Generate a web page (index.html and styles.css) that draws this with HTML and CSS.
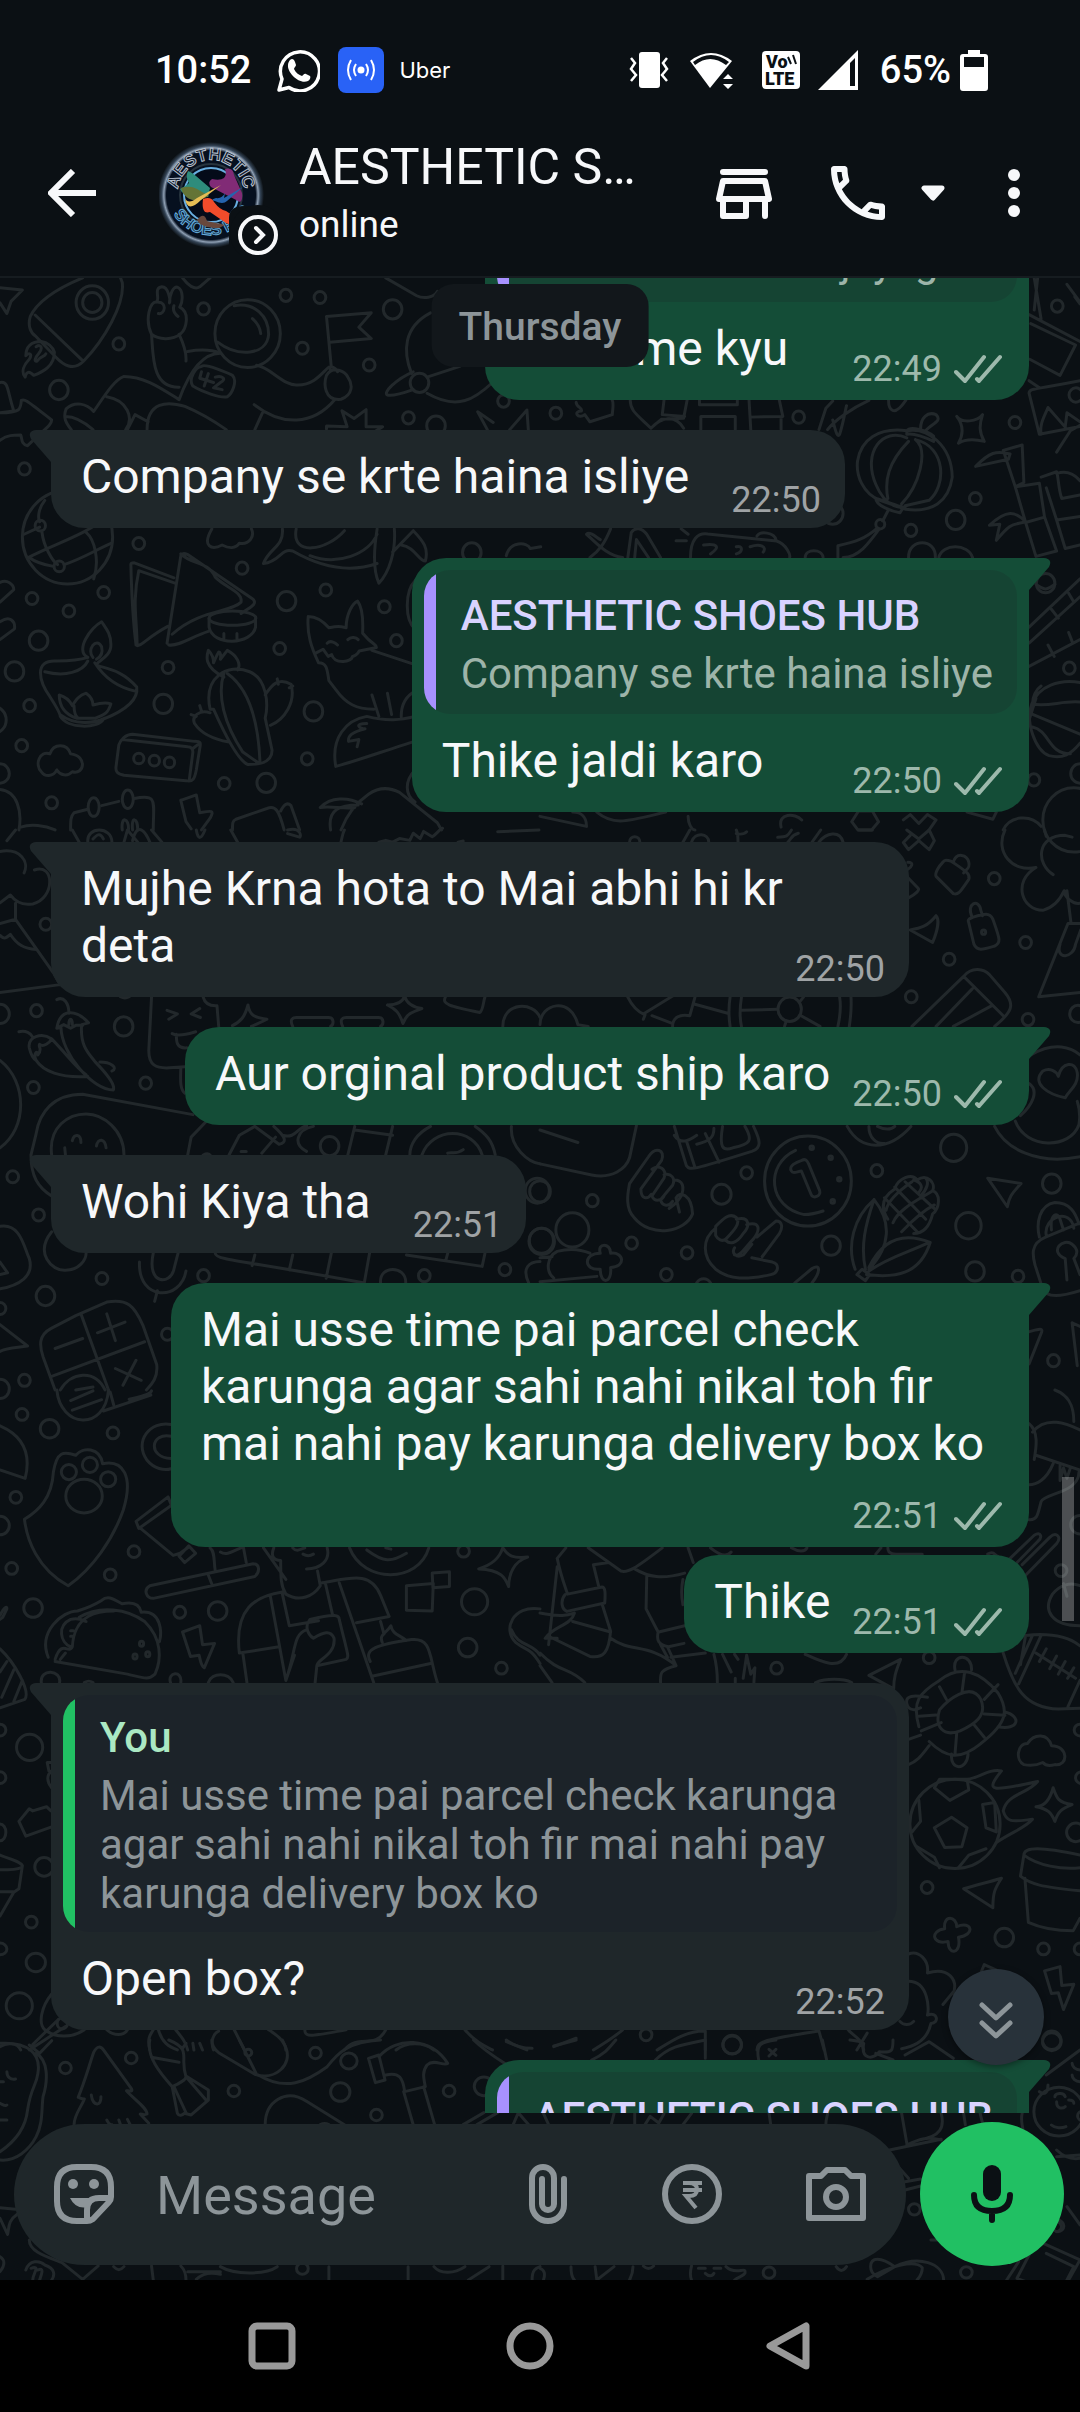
FILE: index.html
```html
<!DOCTYPE html>
<html lang="en">
<head>
<meta charset="utf-8">
<meta name="viewport" content="width=device-width, initial-scale=1">
<title>Chat</title>
<link rel="stylesheet" href="styles.css">
</head>
<body>
<svg class="sprite" aria-hidden="true">
  <symbol id="ticks" viewBox="0 0 48 30"><path d="M2 18l9 9L30 3M23 25l2 2L46 3" fill="none" stroke="currentColor" stroke-width="4" stroke-linecap="round" stroke-linejoin="round"/></symbol>
</svg>
<div class="app">
  <div class="status">
    <div class="status-side">
      <span class="status-text">10:52</span>
      <svg class="s-whatsapp" viewBox="0 0 44 44" width="44" height="44"><path d="M3 42l3-11A19.500 19.500 0 1 1 13 39.500z" fill="none" stroke="#fff" stroke-width="3.500" stroke-linejoin="round"/><path d="M14 12c2-2 4-1 5 2l1 3c0 1-2 3-2 4 2 4 5 6 8 7 1 0 2-3 4-2l4 2c1 1 0 4-2 5-8 4-21-8-20-16 0-2 1-4 2-5z" fill="#fff"/></svg>
      <svg class="s-cast" viewBox="0 0 46 46" width="46" height="46"><rect width="46" height="46" rx="8" fill="#2962f6"/><circle cx="23" cy="23" r="3.500" fill="#fff"/><path d="M18 17q-4 6 0 12M28 17q4 6 0 12M13 13q-6 10 0 20M33 13q6 10 0 20" fill="none" stroke="#fff" stroke-width="2"/></svg>
      <span class="uber">Uber</span>
    </div>
    <div class="status-side status-right">
      <svg viewBox="0 0 40 38" width="40" height="38"><rect x="10" y="1" width="21" height="36" rx="3" fill="#fff"/><path d="M2 7l4 5-4 6 5 6-5 6M38 7l-4 5 4 6-5 6 5 6" fill="none" stroke="#fff" stroke-width="2.500"/></svg>
      <svg class="s-wifi" viewBox="0 0 46 38" width="46" height="38"><path d="M2 10Q23-6 44 10L22 37z" fill="#fff"/><path d="M5 11Q23-3 41 11l-3 3Q22 2 7 14z" fill="#0b1014"/><path d="M40 22l6 7-6 8-11 1V29z" fill="#0b1014"/><path d="M40 23l5 5H35zM40 38l5-5H35z" fill="#fff"/></svg>
      <svg class="s-volte" viewBox="0 0 38 38" width="38" height="38"><rect width="38" height="38" rx="4" fill="#fff"/><text x="4" y="17" class="volte">Vo</text><text x="3" y="34" class="volte">LTE</text><path d="M26 6l3 7M31 4l3 9" stroke="#0b1014" stroke-width="2"/></svg>
      <svg class="s-signal" viewBox="0 0 40 40" width="40" height="40"><path d="M0 40L40 0v40z" fill="#fff"/><path d="M32 13l5-5v28h-5z" fill="#0b1014"/></svg>
      <span class="status-text">65%</span>
      <svg class="s-battery" viewBox="0 0 28 42" width="28" height="42"><path d="M8 1h12v4h5q3 0 3 3v31q0 3-3 3H3q-3 0-3-3V8q0-3 3-3h5z" fill="#fff"/><path d="M4 8h20v10H4z" fill="#0b1014"/></svg>
    </div>
  </div>

  <header class="appbar">
    <button class="icon-btn" aria-label="Back"><svg viewBox="0 0 48 48" width="48" height="48"><path d="M48 24H5M25 2L3 24l22 22" fill="none" stroke="currentColor" stroke-width="6"/></svg></button>
    <svg class="avatar" viewBox="0 -10 120 124" width="120" height="124">
      <defs>
        <radialGradient id="rim"><stop offset=".84" stop-color="#06101f"/><stop offset=".89" stop-color="#8fa0b4"/><stop offset=".93" stop-color="#344456"/><stop offset="1" stop-color="#0b1014"/></radialGradient>
        <path id="arc-top" d="M19 52A33 33 0 0 1 85 52"/>
        <path id="arc-bottom" d="M8 50A44 44 0 0 0 96 50"/>
      </defs>
      <circle cx="52" cy="54" r="53" fill="url(#rim)"/>
      <circle cx="52" cy="54" r="27" fill="#040b19" stroke="#68aee0" stroke-width="2"/>
      <circle cx="52" cy="54" r="31" fill="none" stroke="#27343e" stroke-width="2"/>
      <text class="logo-top"><textPath href="#arc-top" startOffset="50%" text-anchor="middle">AESTHETIC</textPath></text>
      <text class="logo-bottom"><textPath href="#arc-bottom" startOffset="52%" text-anchor="middle">SHOES HUB</textPath></text>
      <path d="M29 30q5 2 8 5l14 12-2 9-15-2q-11 0-13-6 6-3 9-6-4-6-1-12z" fill="#2e8c7c"/>
      <path d="M22 47q9-3 16 1l12 7-11 5q-14-1-17-13z" fill="#647436"/>
      <path d="M66 28q8-2 9 6l8 18q1 7-2 9l-29-15q-4-5 1-8 8 2 12-1 3-3 1-9z" fill="#812b76"/>
      <path d="M26 57q3 7 12 0l24-13-20 15q-14 14-16-2z" fill="#e5bd55"/>
      <path d="M84 46L68 60q-4 4-12 0-6-1 1-3 6 1 9-5l-1 5z" fill="#2563ad"/>
      <path d="M44 58q8-3 11 3 6 8 12 9l12 8q-4 8-12 4L51 71q-9 3-7-13z" fill="#f14c2b"/>
      <path d="M38 79q7-9 10 1 9 2 18 4l-6 3q-18 0-22-8z" fill="#68483c"/>
      <path d="M70 77q0-12 15-12h22v50H70z" fill="#0b1014"/>
      <circle cx="99" cy="92" r="28" fill="#0b1014"/>
      <circle cx="99" cy="94" r="18" fill="none" stroke="#f7f8fa" stroke-width="4"/>
      <path d="M97 87l7 7-7 7" fill="none" stroke="#f7f8fa" stroke-width="4" stroke-linecap="round"/>
    </svg>
    <div class="contact">
      <h1 class="name">AESTHETIC SHOES HUB</h1>
      <p class="presence">online</p>
    </div>
    <button class="icon-btn" aria-label="Shop"><svg viewBox="0 0 72 72" width="72" height="72"><g fill="none" stroke="currentColor" stroke-width="6" stroke-linecap="round" stroke-linejoin="round"><path d="M15 15h42M15 24h42l4 18H11zM15 44v15h23V44M57 44v15"/></g></svg></button>
    <button class="icon-btn call" aria-label="Call"><svg viewBox="0 0 24 24" width="72" height="72"><path fill="currentColor" d="M6.540 5c.06.89.21 1.760.45 2.590l-1.200 1.200c-.41-1.200-.67-2.470-.76-3.790h1.510m9.860 12.020c.85.24 1.720.39 2.600.45v1.490c-1.320-.09-2.590-.35-3.800-.75l1.200-1.190M7.500 3H4c-.55 0-1 .45-1 1 0 9.390 7.610 17 17 17 .55 0 1-.45 1-1v-3.490c0-.55-.45-1-1-1-1.240 0-2.450-.2-3.570-.57-.1-.04-.21-.05-.31-.05-.26 0-.51.1-.71.29l-2.200 2.200c-2.830-1.450-5.150-3.760-6.590-6.590l2.200-2.200c.28-.28.36-.67.25-1.020C8.700 6.450 8.500 5.250 8.500 4c0-.55-.45-1-1-1z"/></svg></button>
    <button class="caret" aria-label="Call options"><svg viewBox="0 0 24 16" width="24" height="16"><path d="M3 3h18l-9 10z" fill="currentColor" stroke="currentColor" stroke-width="5" stroke-linejoin="round"/></svg></button>
    <button class="icon-btn more" aria-label="More options"><svg viewBox="0 0 12 48" width="12" height="48" fill="currentColor"><circle cx="6" cy="6" r="6"/><circle cx="6" cy="24" r="6"/><circle cx="6" cy="42" r="6"/></svg></button>
  </header>

  <main class="stage">
    <svg class="wallpaper" viewBox="0 278 1080 2002" preserveAspectRatio="xMidYMin slice" aria-hidden="true">
      <!-- space, flags and food, top left -->
      <g transform="translate(0 270) scale(.3444 .3571)">
        <path d="M0 50L65 56 32 88l-12 34L0 92M240 22C170 50 110 85 88 130c-8 25 0 45 15 55l60 60c20 20 50 40 80 10 60-60 120-160 112-220l-5-13M102 126l138 128M120 200c-30 0-45 15-45 40 10-10 20-5 10 10-15 15-25 35-12 50 5-20 15-15 25-5 25-10 60-25 60-65-5-15-20-28-38-30M105 215c15-10 20 5 8 18s-15 25-5 22c10-15 20-10 25-20"/>
        <circle cx="268" cy="91" r="47"/><circle cx="268" cy="91" r="28"/>
        <path d="M440 180c-20-40-5-95 15-90 10-10-10-40 15-43 20 0 25 40 22 45 0-20 10-50 25-43s15 40 5 55c30 15 20 60 2 75-25 20-65 15-84 1M460 90c25 0 20 35 0 32M505 100c-5 15 5 25 12 30M440 180c5 60 0 150 80 148M520 180c10 20 22 50 20 75M545 228c30-5 70-5 95 5M640 233c-50 0-90 50-120 130-50-30-100-65-160-65-30 10-60 60-88 98-20-22-55-30-80-7-10 25 0 40 15 58M190 410c30 0 60 20 80 37M310 355c60 10 80 60 55 92M370 447l22-42 38 20M427 447c0-80 60-80 110-65 50 20 90 45 120 65M745 267c40 5 80 60 120 55 50 0 75-40 90-50M738 377c80 60 170 60 235-15M762 400l-22 47M1120 22l90 50c20 10 50 5 60-12"/>
        <circle cx="719" cy="178" r="95"/><path d="M680 100c60-10 100 30 100 80-5 60-90 65-148 22M733 136c12 10 22 25 24 42"/>
        <path d="M585 270c10-10 80 20 90 25 15 15 0 50-15 60-20 5-75-15-100-30-15-20 10-55 25-55zM585 285l-5 18 40 12M605 290l-12 35M625 300c20-5 35 5 15 15l-20 15 25 5M962 272l-14-142 130-10-36 40 36 32-120 10M948 295c20-30 55-10 62 5 15 20 15 50-20 62-50 5-50-45-42-67zM960 282c-10-20 15-10 20 3"/>
        <path d="M1250 120c-80 40-80 110-55 170M1200 285c-50 20-90 60-75 65s60-10 75-15M1240 345c90 50 140 15 190-30M1240 300l95-30"/><circle cx="1218" cy="316" r="27"/>
        <path d="M948 445v-8l60 2-15-45 35 22 35-25v48h48l-20 12M1415 447l-28-50 45 30M1480 447l50-55 4 55M530 22c15 20 35 35 50 25l30-25M0 315c25-5 20 20 40 80L0 400M0 400c60 0 60-10 62-35 10-5 15 0 88 55 0 15-20 25-70 72-20-5-15-20-20-30-20 0-40 0-60 15"/>
        <circle cx="830" cy="71" r="17"/><circle cx="929" cy="77" r="17"/><circle cx="591" cy="109" r="17"/><circle cx="878" cy="219" r="17"/><circle cx="1072" cy="266" r="17"/><circle cx="1140" cy="110" r="27"/><circle cx="345" cy="207" r="17"/><circle cx="171" cy="336" r="27"/><circle cx="1186" cy="414" r="17"/><circle cx="1266" cy="436" r="27"/><circle cx="1462" cy="367" r="17"/><circle cx="71" cy="557" r="17"/>
        <circle cx="196" cy="748" r="131"/><circle cx="117" cy="716" r="15"/><circle cx="172" cy="830" r="15"/>
        <path d="M130 645c-20 25-20 50-15 60M70 740l45-20M122 735c5 40 30 80 45 90M82 805c80-40 160-60 240-120M186 825c50-15 100-45 138-60M85 805c20 15 40 20 70 25M250 735c25 20 40 80 22 130"/>
        <path d="M380 825c0-5 5-5 10-5l115 42M380 825c2 80 5 150 15 225 10 10 30-20 92-52M398 1050c0-70-15-120 5-208l105 35M485 1045L525 800c5-10 15-5 20-3l190 125c15 15-15 25-35 40M490 1050c30 5 70-25 115-38M525 795c30 30 80 20 100 65 30 30 80 40 75 70-30 30-120 20-200 90"/>
        <ellipse cx="675" cy="975" rx="68" ry="20"/><path d="M607 975v25c10 55 125 50 135 0v-25M650 1018v15M688 1018v15"/>
        <path d="M615 725c-30 50 0 60 30 45 20 10 40 10 50-5 30 5 45-20 35-40M820 725c5 50-40 55-55 97 50-5 50-45 85-35 90 50 170 60 245 35M860 725c-15 80 90 60 140 5M900 800c80 30 170-5 195-60M1095 725c-10 60-10 120 5 152 30-30 50-90 45-152M1140 790l60-60c30 30 45 50 35 85-20 0-30-40-70-45"/>
        <path d="M295 985c-30 15-80 80-40 100-30 10-60 10-90 10-70-5-50 60-20 100 20 30 30 45 30 55 20 35 110 35 125 8 90-35 100-70 97-90-40-45-80-50-113-60-15-10 40-20 38-60 0-30-15-45-27-63zM270 1085c-20-20 10-60 25-30 5 20-5 30-15 35M130 1125c60 15 110 0 125-30M275 1100c30 45 70 70 120 80M175 1245c40 30 100 25 130 10M172 1190c20 5 30 15 38 30 10-15 20-30 40-35 15 10 20 20 20 33 20-5 35-8 52-3-10 30-20 30-45 40h-55c-30-10-50-30-50-65zM215 1220c0 15 5 30 12 35"/>
        <path d="M650 1140c-60-30-50-60-45-75 10 10 15 20 15 35 5-10 8-20 15-30 5 0 7 10 5 20l20-25c30 15 40 40 30 55M610 1230c-20-90 50-130 115-105 50 20 55 90 45 130l20 90c0 40-50 40-70 40-30-10-70-90-100-155zM650 1130c-20 60 0 140 55 220l45 30M660 1130c60 40 90 130 95 250M770 1190c20-30 40-50 75-30 15 50-20 100-60 115M610 1240c-30-10-55 10-45 30 20 30 60 45 100 52M555 1245l15 5M580 1220l5 15M805 1145l3 15M850 1165l-10 5"/>
        <path d="M895 970c-5 50 10 90 30 130 25 0 25 20 30 50l20 25c30 40 60 55 110 55M895 970c25 0 45 15 60 32 25-5 30-5 50 0 0-40 20-70 33-75 20 25 15 70 15 90 30 35 40 30 40 40l-50 10c-5 10-15 15-20 15 0 15-50 25-60-5l-10 5-15-20-20 10M1080 1065l125 40M950 1045c10-10 25 0 30 5M1010 1035c10-10 25-5 30 0M1080 1190l20 60M1125 1185l12 60M975 1390c-15-80 30-130 90-140 60 15 100 10 140 0M975 1390c60-15 160-50 230-70M1165 1250c0-40 20-60 40-70M1065 1270c-40 0-20 15-5 15-40 10-50 20-48 35l30-5-5 20M0 875c20-10 40 5 40 20l-40 35M0 985c30-20 45 0 42 20l-42 30M1205 870c-30 30-30 110 0 135"/>
        <path d="M345 1330c5-15 20-30 40-30l180 20c20 0 18 5 15 20l-10 60c-5 25-10 35-30 30l-180-15c-20-5-25-10-23-25zM355 1315l190 20c15 0 15 10 15 15l-10 75M560 1340l20-15M120 1405c-20-20-5-60 25-50 10-30 50-30 60 0 50 5 40 60 5 50-15 15-35 10-45-5-10 20-35 20-45 5z"/>
        <circle cx="403" cy="1368" r="15"/><circle cx="448" cy="1374" r="15"/><circle cx="492" cy="1379" r="15"/>
        <path d="M255 1510l-40 10c-10 10-10 20-10 48M295 1500l50-12M390 1480c70-15 55 10 55 88M525 1485l45-15 10 50c30-5 45-10 30 15l-25 33M525 1485l15 60 15 20M675 1568c0-20 0-25 10-30l90-30c25-10 35 5 50 60M815 1515c10-20 20-25 30-15l25 68M930 1505c30-30 80-30 120-10M930 1505c30-5 70 5 100 0M960 1568c-10-60 30-70 80-70M990 1568c20-50 50-80 80-100 30-20 60-20 90-5l110 85 12 20M1205 1400c-30 30-30 70 0 90M0 1455c50 5 65 60 55 113M60 1560c30-10 70-5 100 8M355 1568c-5-40 20-35 18 0M385 1568c-5-40 15-35 15 0"/>
        <ellipse cx="272" cy="1504" rx="16" ry="26"/><ellipse cx="371" cy="1482" rx="16" ry="26"/>
        <circle cx="403" cy="766" r="17"/><circle cx="703" cy="835" r="17"/><circle cx="832" cy="927" r="27"/><circle cx="946" cy="896" r="17"/><circle cx="1116" cy="943" r="17"/><circle cx="93" cy="920" r="17"/><circle cx="200" cy="955" r="17"/><circle cx="301" cy="903" r="17"/><circle cx="112" cy="1038" r="27"/><circle cx="42" cy="1124" r="27"/><circle cx="488" cy="1113" r="17"/><circle cx="812" cy="1060" r="17"/><circle cx="1151" cy="1038" r="17"/><circle cx="474" cy="1215" r="27"/><circle cx="910" cy="1236" r="27"/><circle cx="86" cy="1220" r="17"/><circle cx="63" cy="1332" r="17"/><circle cx="892" cy="1369" r="17"/><circle cx="651" cy="1438" r="17"/><circle cx="773" cy="1436" r="27"/><circle cx="150" cy="1492" r="17"/><circle cx="0" cy="1410" r="27"/><circle cx="-20" cy="1260" r="38"/><circle cx="1370" cy="791" r="27"/><path d="M1470 800c10-40 60-40 70-20l30-5"/>
      </g>
      <!-- lantern, bamboo and cards, top right -->
      <g transform="translate(540 270) scale(.3444 .3571)">
        <path d="M1435 22l20 115M1445 22l-10 90M1420 125l148 75M1425 150l130 60-45 85-88-45M1420 310l30 20M1420 345c0-15 20-10 148-35M1420 345l30 115 118-22M1455 460c-5-30 10-50 20-75l50 55 5-40 38 25M1500 510l40-60 28-15M1530 40l38 50M1553 75l15 20M1265 550c40-40 60-45 100-35l-5 15zM1345 505l55-15 5 105-25 12zM1380 607l70-10 15 95-55 15zM1410 707l55-15 35 95-60 15zM1455 580l45-15c5 10 5 50 15 75l53-10M1470 610l30 90 68-10M1500 700l25 80 43-10M1500 570c30-10 50 0 68 20M1305 715c50-45 75-40 105-10-40 10-40 0-85 52l10-45zM1210 410c15 20 60 15 75-5-10 30-10 50 5 75-20-5-50-10-75 5 15-25 15-50-5-75z"/>
        <path d="M1065 450c60-10 130 40 132 130-10 70-60 100-135 90l-75-25c-50-20-70-70-65-110 10-60 60-95 143-85zM1065 470c-70-30-130 40-90 130 30 70 80 70 90 60M1090 475c90 20 90 130 40 170l-70 15M1070 480c-60 60-70 110-60 160M1090 475c40 30 10 130-40 180M1065 450c10-15 60 0 78 15v15c-20-10-60-25-78-20zM975 640c20 5 60 20 80 25l-10 15c-25-5-70-20-70-40zM1105 445c0-30 20-50 45-40 20 20-15 25-30 45M1010 675l-15 28"/><circle cx="988" cy="712" r="13"/>
        <path d="M985 725c-30 40-60 80-105 80M865 805v-33c50-10 80-20 115-50M105 370c0 15 20 15 15 25-25 0-10 25 10 10l15 20 65-20c0-10 5-30 0-40M262 365c0 30 20 40 60 78l30-25 65-3 10-50M322 443c30-30 70-40 95 0M360 365l-5 40 65 5M463 365v12h110v-12M467 447v-37h100v37M607 365l5 82M695 365l10 45-95 2M700 447v-37M810 447l20-60 20-20M835 447c20-25 70-60 120-82M850 420c10 40 15 50 20 40 10-30 15-60 20-80M1012 365c0 25 15 50 50 0"/>
        <path d="M145 805c30-20 45-45 60-80M135 740c30 25 60 60 105 65M135 740c10-10 30 10 40 15M255 805l10-70c10-15 30-15 45 5l40 65M275 805l5-50 35 50M395 758h30M410 725l20 15M437 805c0-50 20-70 50-66l200 20c30 10 40 40 38 45M630 745c10-15 50-10 55 10M475 770c40-5 50 5 20 25M570 775c20-5 20 15 0 20M610 775c30-10 50 0 38 15"/>
        <path d="M1420 1000l148-135M1420 1045l148-130M1420 1110l148-75M1485 950l20 25M1535 905l15 25M1475 1050l18 32M1535 1015l10 25M1440 880c30 20 30 15 55 0"/>
        <path d="M1568 1155c-60-10-120 10-140 60-20 50 10 130 50 145 40 10 65-5 90-35M1430 1215c40 10 90-10 138-5M1430 1215c0-20 10-40 25-50M1420 1240l148 60M1430 1280c50 10 45 75 110 75M1440 1200l-20 60"/>
        <circle cx="46" cy="401" r="17"/><circle cx="751" cy="412" r="17"/><circle cx="1379" cy="427" r="17"/><circle cx="1502" cy="101" r="17"/><circle cx="1556" cy="350" r="20"/><circle cx="1264" cy="640" r="17"/><circle cx="1207" cy="700" r="27"/><circle cx="1077" cy="729" r="17"/><circle cx="850" cy="682" r="30"/><path d="M1070 805c0-55 80-55 78 0M1158 805c10-40 85-40 98 0M770 805c0-25 50-25 52 0"/><circle cx="1468" cy="877" r="27"/><circle cx="1537" cy="1115" r="17"/><circle cx="1434" cy="1428" r="17"/><circle cx="1568" cy="1410" r="27"/><circle cx="1550" cy="1540" r="90"/>
        <path d="M0 1530l135 28c0-30-20-40-40-40M165 1518c50 40 90 25 200 0M430 1530c0 20 10 38 20 38M700 1560c-10-40 40-40 60-20M905 1545l20-30h40l18 30-20 23h-40zM1055 1540l20-15 25 25 25-25 25 15-20 28M1345 1568c20-40 80-45 110-10M1240 1518l75 20 10-20"/>
      </g>
      <!-- garden, chillies and calculator, middle left -->
      <g transform="translate(0 830) scale(.3444 .3571)">
        <path d="M20 30L45 0M0 60c60-10 85 30 70 60M100 112c60-20 60 80-5 95-30 5-50-5-65-25l-30 22M45 205v45l-45 12M45 250l110 150 20 33M0 295c10 10 15 10 30-3 20 30 40 40 75 43M175 433L0 455M210 0l20 34M255 34c-5-45 70-45 70 0M270 25c10-10 20-20 30 0M360 34l10-34 30 34M385 30c15-60 40-20 50 4M440 0l30 34M570 0c5 30 15 25 25 0M670 0l20 34M835 0c40-10 40 20 35 20l-35-10M990 34c5-20 5-25 10-34M1100 34l20-5 20 5 20-10 30 5 10-20 20 15 10-20 25 15c10-5 20-20 30-24M1445 5l120-5M1330 34l15-3"/>
        <circle cx="133" cy="264" r="17"/><circle cx="106" cy="506" r="17"/><circle cx="0" cy="515" r="27"/><circle cx="359" cy="550" r="27"/><circle cx="97" cy="721" r="17"/><circle cx="423" cy="709" r="17"/>
        <path d="M165 475c20-10 35 10 35 38M165 555c10-60 60-50 92-15l-20 5c-5 60 20 80 40 105 20 20 60 60 52 78-60 0-150-100-152-175zM165 555l20-10 20 10 15-8 20 0M200 545c0-20 10-20 10 0M55 565c20-5 35 5 40 15M150 585c-30-20-70-5-65 25 5 20 10 30 20 35M105 645c20 30 70 50 150 45M150 585c50 50 70 80 100 100M105 645c-10-20 5-30 5-15 15-20 0-20 5-30 10 10 30-5 35-15M290 650c30 0 55 15 35 25"/>
        <path d="M440 468l-8 150c0 40 20 50 60 48l45-3M590 468c5 20 20 25 40 24l5 58M485 505l30 10-25 15M580 500l-25 15 27 10M500 570c20 10 50 0 68-5M512 572c0 20 0 40 30 38M525 665c0 25-5 60 12 72M720 490c5 30 20 35 55 40-20 10-35 15-45 20M720 490c-10 35-20 45-45 58M850 550c-10-20 0-25 10-25h95c15 0 15 20 5 25M995 550c-10-20 0-25 10-25h95c15 0 15 20 5 25M1125 490c30 0 45-10 50-25 5 20 20 30 50 35-30 10-45 15-55 42-10-30-20-40-45-52M1293 468c-10 20 10 25 100 43 10-5 10-30 15-43M1460 550c0-70 90-70 108-25M350 467c10 5 15 5 25 0"/>
        <path d="M0 645c80 60 80 190 0 245M105 850c10-60 50-110 135-110l320 57M105 850l-15 60c0 60 20 90 60 115M150 910c-10-80 50-115 100-115s110 45 110 115M190 910l-2-20M210 870c5-20 25-20 25 5M280 885c5-25 25-20 28 5M545 910l10-50 45-45M665 910l30-55 45-25 70 50c25-5 20-20-15-50M760 905l40-45M820 855c40 10 40-20 70-27M890 900c-40-20-30-60 20-70M1010 910l20-80M1120 910l20-80M1030 840l110 15M1190 910c0-30 20-60 60-80M1225 910c30-80 150-80 175 0M1380 830c30 20 50 40 58 80M1485 830c-5 60 50 100 83 105M590 910c10-5 15-5 20 0M1300 905c10-5 25 5 45-10M700 900h15"/>
        <circle cx="957" cy="885" r="27"/><circle cx="37" cy="971" r="17"/><circle cx="112" cy="1078" r="17"/><circle cx="1560" cy="1010" r="35"/><circle cx="1572" cy="1150" r="35"/><circle cx="1466" cy="1231" r="17"/><circle cx="1232" cy="1248" r="17"/><circle cx="591" cy="1248" r="17"/><circle cx="296" cy="1256" r="17"/><circle cx="132" cy="1305" r="27"/><circle cx="0" cy="1340" r="17"/><circle cx="486" cy="1412" r="17"/><circle cx="71" cy="1541" r="17"/><circle cx="0" cy="1565" r="27"/>
        <path d="M150 1125c-50 60 0 110 40 108 40 0 60-30 60-48M445 1185c-20 90 50 90 60 45l12-45M405 1210c-5 110 120 110 135 25M457 1290l-8 30M625 1185c0 20 80 20 430 83M740 1190l-8 30M850 1190l-10 42M962 1185l-15 70M1073 1185l-15 82M1180 1190l220 32 8-36M1300 1185l-5 18M1105 1268c-5-50 75-50 73 0M1535 1268c-20-40 0-60 33-60M0 1110c60-10 70 60 85 90 15 50-30 75-85 85M0 1210l22 30-22 5"/>
        <path d="M150 1395l70-35 90-38c60-10 80 10 105 65l40 110c5 40-20 60-30 71M150 1395c-40 20-35 50-25 80l35 93M235 1355l80 213M150 1530l270-97M160 1452l80-28M283 1408l80-30M310 1355l25 75M335 1508l75 33M395 1485l-38 70M175 1568c30-50 100-60 130 0M220 1568l50-8M0 1385l80 60c-30 5-60 5-80 15"/>
      </g>
      <!-- locks, hands and corn, middle right -->
      <g transform="translate(540 830) scale(.3444 .3571)">
        <path d="M415 34l20-34M440 34c10-30 50-25 50 0M570 0c5 10 5 20 5 34M600 5c-10 10-30 5-30 5M690 20c30 0 30-5 40-20M720 34c10-10 10-20 30-25M790 34l25-34M810 34c20-25 60-35 70 0M925 0h40M260 34c0-20 30-20 30 0M1065 0l35 25 30-25 15 30-15 25-30-25-30 25-15-20 20-20M1068 90c20 0 10 15 0 20M1070 135l28 28c5 5-5 15-28 27"/>
        <path d="M1170 90c-10 10-25 30-20 40l50 48c15 5 20-5 45-40 5-15-5-20-50-50-15-5-20-5-25 2zM1200 90c10-30 40-20 45 0 5 20-10 20-15 30M1245 260l15 60c10 20 25 15 60 5 20-10 15-20-5-75-10-20-25-15-60-5-15 5-12 10-10 15zM1255 245c-20-40 20-55 25-20l5 15M1075 280c30-5 50-10 75-40 10 10 5 40-10 75z"/><circle cx="1288" cy="286" r="6"/>
        <path d="M1350 0c-30 60 20 120 90 105M1440 105c-70 40-40 120 20 120 40-10 55-40 62-55 0 20 30 40 46 35M1465 0l5 18M1490 125c-50-30-50-110 35-110l20 5M1530 170l12 92M1568 262h-35l-85 205 120-12M1510 320c-15 45 40 40 45 0l15-40"/>
        <path d="M1080 550l150-140c25-30 60-20 75-5l45 50c30 35 20 55-30 95M1230 410l115 110M1150 550l105-105M1200 550l112-58M255 468c10 20 25 40 50 50l-5 12M300 515l85-50M385 550c0-25 20-35 50-30l15-52M450 488l95 25M325 520l55 20M585 468c-5 30-5 60 0 82M552 468c-5 30-5 50 0 82M870 468c5 30 0 60-5 82M903 468c2 30 0 50-5 82M585 505l105-3M755 480l10-12M758 520l55 30M715 535l-5 15M0 545c0-60 90-80 110 0M110 545l30 5"/><circle cx="725" cy="502" r="34"/>
        <path d="M1425 630c70-40 120-20 143 0M1320 830c30 60 120 110 248 85M1380 815c30 80 160 80 185 10 5-30 0-50-5-65M1525 750c-50-10-100-40-65-75 20-10 40 0 45 15 10-40 50-45 55-10s-25 50-35 70zM1420 710c30 20 10 60-25 90"/>
        <path d="M0 840l110 35M280 828l-20 90c-10 30-50 60-110 48L0 935M390 830l35 110c10 15 25 10 190-40 30-10 25-30 5-70M390 855c20 30 50 10 65 0M425 870l25 75M480 850l40 80M455 880c40-10 50-20 50-45M530 830c-10 60 0 70 30 60 50-10 60-20 35-60M892 830c40 70 120 70 185 0M955 830c0 30 20 50 45 48M980 830c20 10 40 10 50 0"/>
        <circle cx="778" cy="983" r="126"/><path d="M742 897c-90 40-80 160 25 180 20 0 40-5 55-10M730 955c-10-15 15-25 30-30 10-5 15 0 20 10l32 75c5 15-20 25-25 10l-28-65c-10 0-25 10-29 0z"/><circle cx="789" cy="890" r="5"/><circle cx="844" cy="918" r="5"/><circle cx="869" cy="978" r="5"/><circle cx="850" cy="1040" r="5"/>
        <path d="M260 990l55-75c20-30 50-20 38 10l-60 80c0 30 20 30 30 15M325 950c20-15 45 0 35 25l-35 50c10 20 30 10 35 0M360 965c20-5 35 10 25 30l-35 40c5 20 25 20 35 5M390 980c25 0 30 20 20 45-20 30-30 30-35 35M405 1070l-10-40c10-20 45-10 48 45-20 50-120 70-170 10-30-30-15-80-13-95"/>
        <path d="M510 1110c20-20 40-40 60-25 15 15-10 40-30 60-10 10-25 0-30-10zM570 1090c40-10 40 20 20 40-20 30-40 30-50 20M600 1105c40-10 40 15 20 40-30 30-40 50-55 45M615 1160l-25 30c-20 10-35-5-25-20M630 1140l55-45c20 0 20 20 10 35l-50 65M510 1115c-40 30-40 80 0 115 40 30 90 30 160 15 25-5 25-30 5-35l-60-12"/>
        <path d="M970 1035c-60 50-80 130-55 195M970 1035c-25 70-40 130-25 195M970 1035c50 60 50 130-15 195M955 1225c40-80 100-100 178-70-30 90-100 100-185 90M955 1235c60-40 110-50 175-80M935 1230l22 15-12 17-25-17zM1010 1090c-20-30-20-60 20-85 10-30 50-45 65-25 30-20 55 10 45 30 25 10 20 50 0 65-10 40-30 55-55 55M1000 1030l95 95M1030 1000l90 90M1060 985l85 75M1080 985c-30 20-70 50-75 80M1140 1010c-30 20-100 50-115 90M1145 1050c-40 20-70 50-95 75M1085 980c20 5 30 20 15 35M1120 975c10 10 5 30-15 50"/>
        <path d="M1300 975l97 15c-30 30-35 40-40 65zM1450 1140c-10-40 0-90 45-97 45 0 60 30 70 60M1470 1135c-10-50 70-80 80-20M1485 1120c-5-50 20-50 25-30l10 30M1568 1100l-100 40c-50 20-35 60-30 80l20 60c10 35 60 25 110 10M1530 1260l-5-60c-50-20-5-60 20-40 20 15 15 30 5 40l18 45"/>
        <circle cx="1201" cy="890" r="38"/><circle cx="600" cy="960" r="17"/><circle cx="978" cy="954" r="17"/><circle cx="527" cy="1020" r="28"/><circle cx="152" cy="1038" r="17"/><circle cx="1486" cy="990" r="27"/><circle cx="0" cy="1012" r="30"/><circle cx="1244" cy="1108" r="37"/><circle cx="94" cy="1120" r="48"/><circle cx="5" cy="1152" r="37"/><circle cx="266" cy="1157" r="17"/><circle cx="427" cy="1184" r="17"/><circle cx="845" cy="1164" r="27"/><circle cx="367" cy="1245" r="17"/><circle cx="1263" cy="1236" r="27"/><circle cx="1388" cy="1250" r="17"/><circle cx="1491" cy="1486" r="17"/><circle cx="1319" cy="136" r="17"/><circle cx="1410" cy="315" r="17"/><circle cx="1188" cy="362" r="17"/><circle cx="1078" cy="467" r="17"/><circle cx="1417" cy="531" r="17"/><circle cx="1562" cy="515" r="24"/>
        <path d="M0 1198l35-3M0 1265l165-15M40 1255c-25-20-20-60 10-75 40-10 70-5 95 5M175 1185c-10-30 30-30 30 0 40-5 45 40 0 40 5 45-30 50-30 5-50 5-50-45 0-45zM455 1268c10-15 30-15 40 0M740 1268l50-40c25-15 25 10 0 40M1420 1405c20-5 45-15 35 5l-35 85M1545 1380l23 10M1545 1380l15 120"/>
      </g>
      <!-- paw, taco and painter, lower left -->
      <g transform="translate(0 1390) scale(.3444 .4209)">
        <path d="M165 0c10 90 140 100 150 0M205 25l65-23M210 48l85-25M300 50l138-38M330 35l-10-30M375 22c30-5 60-10 65-20M0 85c70 25 90 70 73 125L0 190M155 195c10-50 30-50 65-40 20-20 70-20 78 20 60-10 90 30 60 110-30 70-90 140-160 180-90-40-120-110-127-158 40-20 80-50 84-112z"/>
        <ellipse cx="200" cy="195" rx="22" ry="18"/><ellipse cx="261" cy="178" rx="22" ry="18"/><ellipse cx="314" cy="212" rx="22" ry="18"/><ellipse cx="244" cy="252" rx="53" ry="40"/>
        <path d="M497 82c-60-10-110 40-70 85 20 20 50 25 70 20M497 110c-60-10-70 50 0 53M395 312l93-58 10 20-95 55zM403 325l100 68 20-5 25-15M520 395l28-25 20 18-32 22zM435 465l300-52c20 0 20 20 5 30l-295 52c-20 0-30-20-10-30zM605 440l12 25M610 375c15 10 10 30 15 55M715 410l-8-35M640 385c20 10 40-5 60-10"/>
        <path d="M765 375l65 75M795 375c-10 20 0 30 20 30 0 40 0 60 15 80 40 20 80 5 100-20l-8-35M950 375c10 30-20 50-60 50M850 375c10 10 20 5 35 0M880 390c10 5 20 5 30 0M820 480c-80 10-140 40-125 145l115-15M705 625l12 70M785 490l45 200 25-60M820 485l20 75 85-12M935 458c80-10 140-30 170 30l25 50-95 15M945 460l20 72M985 458l100 237M1105 550l10 30M900 545c-20 20 0 40 10 45 30-15 50-20 60 0 5 40-50 50-50 65l85-15c10-5 5-10-20-95 0-10-10-15-85 0zM890 570c-40 10-30 50-60 120M920 655l-5 40M1075 645c-20-30 20-40 120-52 60-5 50 40 75 102M1080 680l170-30M1110 600c-10-20 10-20 25-40 5 20 20 20 45 35"/>
        <path d="M1015 375c40 85 200 85 230 0M1065 380c50 30 70 30 115 8M1120 375l15 3M1180 465l78-5-3 65-75-2zM1255 435l50-3v35l-48 3zM1390 425c40-10 60-25 70-50 15 20 30 25 72 22-40 10-55 40-55 70-10-20-20-40-87-42M1568 520c-80-10-110 50-70 80 30 20 40 10 70 50M1485 570c20 40 60 30 83 60"/>
        <path d="M140 635c-30-60 40-110 85-110 20-5 40-10 70-25 20-15 40 0 60 8 30-5 50 0 55 20 60-5 60 50 53 70M230 540c60-30 140-20 190 10 50 40 50 90 30 125-20 15-30 10-80 0L160 645M160 640c20-50 40-10 50-30 5-80 80-85 120-85M205 610c-30-10-40-50 0-65 30-5 40 5 45 5M190 625l-15 15M205 572h8M205 585h8"/>
        <circle cx="411" cy="603" r="6"/><circle cx="429" cy="628" r="6"/><circle cx="392" cy="633" r="6"/>
        <path d="M0 615c40 30 90 100 72 120L0 755M20 645L0 670M40 665L5 730M65 690l-25 50M530 575l50-15 8 45 35-3-30 58c-10-5-10-15-15-30l-25 3zM0 535c20-30 20-15 20-15l-12 20-8 5M120 695c-5-35 60-30 53 0M245 695c10-5 15-5 25 0M495 695c-10-25 35-30 30 0M605 695c10-25 60-25 72 0M150 885h-13l5 20 10 3M150 905c-15 10-15 25 0 40M55 1025l30-30 10 5 40-10 13 10M55 1025l20 35 75-22M0 1105c30 10 60 15 65 25l-10 55-15 8L0 1250M0 1140c30 0 50 0 60-5M0 1192h38"/>
        <path d="M150 1435c-30 30-40 70-20 85 30 20 80 20 115 0M190 1512L85 1568M170 1495l-75 60M0 1560c20-10 50-10 60 8M310 1520c20 15 50 15 60 0M435 1568c-10-30 5-40 10-48M460 1520c10 30 30 40 55 48M510 1520c20 20 30 30 35 48M620 1568c-10-20 0-40 15-45M680 1520l30 48M780 1520c30 15 50 30 50 48M885 1520c0 20 20 15 120 0M1000 1568c40-40 90 0 120-48M1150 1568c30-20 80-20 110 0M1350 1520c30 30 60 40 80 48M1470 1548l60 20"/><ellipse cx="181" cy="1505" rx="15" ry="13"/>
        <ellipse cx="64" cy="58" rx="17" ry="14"/><ellipse cx="144" cy="92" rx="27" ry="22"/><ellipse cx="328" cy="102" rx="17" ry="14"/><ellipse cx="46" cy="255" rx="17" ry="14"/><ellipse cx="0" cy="322" rx="27" ry="22"/><ellipse cx="34" cy="424" rx="17" ry="14"/><ellipse cx="389" cy="384" rx="17" ry="14"/><ellipse cx="320" cy="439" rx="17" ry="14"/><ellipse cx="96" cy="518" rx="27" ry="22"/><ellipse cx="522" cy="528" rx="17" ry="14"/><ellipse cx="632" cy="525" rx="27" ry="22"/><ellipse cx="1346" cy="383" rx="17" ry="14"/><ellipse cx="1378" cy="503" rx="38" ry="31"/><ellipse cx="1358" cy="612" rx="27" ry="22"/><ellipse cx="1456" cy="661" rx="17" ry="14"/><ellipse cx="0" cy="808" rx="17" ry="14"/><ellipse cx="86" cy="849" rx="38" ry="31"/><ellipse cx="0" cy="921" rx="17" ry="14"/><ellipse cx="0" cy="1051" rx="17" ry="20"/><ellipse cx="128" cy="1133" rx="27" ry="22"/><ellipse cx="91" cy="1264" rx="17" ry="14"/><ellipse cx="0" cy="1328" rx="20" ry="14"/><ellipse cx="104" cy="1360" rx="28" ry="22"/><ellipse cx="56" cy="1463" rx="38" ry="31"/>
      </g>
      <!-- turtle, balls and plant pot, lower right -->
      <g transform="translate(540 1390) scale(.3444 .4209)">
        <path d="M1495 0c50 15 55 50 55 75M1420 80c30 20 20 60 15 85M1430 100c40-40 100-20 138-5M1440 155l128 35M1490 175c-20 40-50 50-70 50M1510 180v35l10-30 10 25 10-25M1565 195c0 50-100 50-110 70-10 30-10 45-35 43M1365 400l70-55c20-10 25 5 10 15l-60 50M1400 415l80-65c20-15 35 0 20 15l-90 75M1568 465c-30-10-60 0-80 20-30 40 0 75 80 75M1520 460l10 30M1300 390c20-10 20 5 30 5"/>
        <path d="M50 400c10-10 20-20 25-25M140 375l95 55c20 5 40-5 120-55M50 400c10 40 20 60 30 85L180 468c10 0 10 15 8 38l-110 20c-15-5-20-25-5-40M50 420L25 605M155 415l45-5M155 415l15 50M180 508l25 65c-5 50-20 65-60 60L25 585M95 550l110 25M0 530c60 10 80 5 100 0-10 30-60 30-85 60H50M275 425c40 20 80 25 145 10M430 375l15 35M310 440l-2 80 35 55c-5 20 0 30 30 35l45-8M345 575l75-15M380 635l100-10M350 605l20 30M205 590c60 35 110 10 190 65-50 10-45 20-45 40M370 610l25 45M0 625c60 50 80 30 130 70M0 655l35 40M495 375c30 20 50 20 60 10M730 375c20 10 40 10 45 0M975 390l15-15M1010 375c0 20 20 15 100 15M415 450c-5 20-5 40 0 60M505 628c10 30 10 50 10 67M530 628l25 42M565 628l10 12M590 685l10-55 12 45 12-15-3 35M567 685v10M770 628c40 15 100 40 120 0M800 695c30-10 80-10 105 0"/>
        <path d="M955 678l92-38c-15 30-20 45-20 70zM1205 665c-10-40 50-40 48 0M1065 745c-5-20 20-20 60-15M1065 745c5 20 30 15 40 10M1350 765c50 10 40 45-20 35M1195 865c-5 40 45 40 48 0M1100 800c-20-60 0-80 60-110 60-40 120-20 170 30 30 40 30 70-50 120-60 40-100 35-150-5M1160 760c20-20 90-70 120-25 20 40-20 60-60 75-50 15-75-10-60-50zM1225 720l8-50M1180 735l-20-30M1290 735l40-35M1290 770l60 3M1260 795l30 30M1210 815l-5 50M1165 790l-58 20M1100 775l50-3M1070 830l35-10M1070 890c30-10 40-25 60-45"/>
        <path d="M1345 625c30 80 60 130 160 133l63-2M1410 583c60-5 120 0 158 25M1410 583l-15 70M1430 583l-50 90M1455 583l-65 115M1440 625l115 60M1470 615l-20 30M1500 632l-20 30M1525 645l-20 30M1550 660l-18 25M1568 690l-35 62M1405 890c-25-10-20-50 10-50 20-25 60-25 70 5 50 0 50 50 10 45-20 5-30 0-35-5-20 8-35 8-55 5z"/>
        <ellipse cx="1205" cy="1031" rx="131" ry="106"/><path d="M1145 945l15-20h80l5 25-55 25zM1145 1040l50-25 45 25-15 45-50 2zM1285 985l35-5 5 70-30-10zM1100 975l5 50-25 25M1095 1085l50 25 15 25M1215 1135l30-30 50-15M1240 925c40-5 60-25 100-20-50 50-30 50 105 25-30 30-90 30-100 70 10 30 30 25 85 20-20 20-60 30-105 55"/>
        <path d="M1440 990c25 0 40-15 50-45 10 25 15 35 55 40-30 10-40 15-50 40-10-20-20-30-55-35zM1230 1185c40-10 70-15 110-25-20 25-25 35-25 70zM1405 1105c0-20 50-20 163 0M1405 1105l-10 50c30 20 60 25 173 35M1405 1105c40 25 110 35 163 30M1408 1160l10 105c40 15 80 20 130 20l20-30M1175 1280c-5-35 35-30 35-5 45-15 55 20 5 25 10 40-30 45-30 10-45 10-55-25-10-30zM1465 1380l45-10 5 45 35-3-30 60-15-40-20 2z"/>
        <path d="M1070 1340c30-10 60 15 55 45 60-15 90 15 75 50M1070 1405c60 0 60 70 55 80 30-10 35 20 10 20-10 40-50 55-85 60M1200 1430l-30 30M1280 1385l10-20 40 15M1045 1500c10 10 30 10 40 0"/>
        <path d="M40 1560l65-20M155 1568c40-20 60-30 85-48M340 1568c40-20 80-45 140-45v45M630 1568c0-20 20-25 180-45l15 45M895 1520c20 20 35 15 45 48M920 1568l30-40"/>
        <ellipse cx="1513" cy="429" rx="17" ry="14"/><ellipse cx="687" cy="661" rx="17" ry="14"/><ellipse cx="1130" cy="636" rx="17" ry="14"/><ellipse cx="1568" cy="320" rx="27" ry="22"/><ellipse cx="1568" cy="808" rx="17" ry="14"/><ellipse cx="1572" cy="921" rx="17" ry="14"/><ellipse cx="1556" cy="1051" rx="27" ry="22"/><ellipse cx="1124" cy="1182" rx="17" ry="14"/><ellipse cx="1348" cy="1301" rx="27" ry="22"/><ellipse cx="1462" cy="1328" rx="17" ry="14"/><ellipse cx="1568" cy="1328" rx="17" ry="14"/><ellipse cx="1486" cy="1545" rx="27" ry="22"/><ellipse cx="558" cy="1555" rx="27" ry="22"/><ellipse cx="308" cy="1532" rx="17" ry="14"/>
      </g>
      <!-- tree, shrimp and hammer, bottom left -->
      <g transform="translate(0 2040) scale(.3444 .3333)">
        <path d="M0 10c80-5 120 30 110 90-5 40-20 40-30 110-5 50-30 90-80 125M105 40c35 20 35 80 20 130-5 40 0 80-20 120-20 40-60 75-105 70M0 125h10M20 95c0 15 10 25 25 22M0 190c10 5 15 10 20 5M0 240h20M85 15l30 25 35-38"/>
        <path d="M215 254c0-30 20-50 30-77-10 0-15-5-18-5 20-50 30-90 45-135 10-20 20-20 30-5l80 115c5 10-10 5-15 5 15 20 60 50 60 70-10 5-15 0-20 0l25 28M265 165c5 35 30 35 28 5M310 240c5 10 10 15 15 14M345 240l5 14M370 238l8 16"/>
        <path d="M435 0c-10 50 30 100 65 140 20-10 40-20 40-30-20-60 20-80-50-110M440 52l80 15M500 140l15 80c5 10 15 5 20 0l20 5 50-45v-30l-65-42M505 140l35 78M540 110l60 72M615 0c0 20 10 30 20 38l105 65c60 20 110-30 90-80l-10-23M695 0l50 103M540 10l-10 15M560 10l3 20M580 10l8 20"/><circle cx="721" cy="38" r="10"/>
        <path d="M750 105c80 50 140 20 200-25 30-40 60-75 155-80M1070 55l30-10 18 75-28 8zM1100 50c50-60 150-60 200 20-10 10-40-15-60 5-15 20-10 40-5 65l-60 15c-5-40-15-60-55-50M1172 155l28 100M1230 140l32 114M770 254c0-70 60-110 120-70l110 70M930 254c10-5 15-5 25 0M1375 0c30 30 60 50 90 70M1470 0c20 15 40 25 75 25M1345 254l60-36M1385 254l60-36M1490 254l15-36 30 36"/>
        <circle cx="1013" cy="63" r="24"/><circle cx="190" cy="84" r="17"/><circle cx="381" cy="54" r="17"/><circle cx="679" cy="153" r="17"/><circle cx="988" cy="156" r="28"/><circle cx="916" cy="39" r="17"/><circle cx="1093" cy="225" r="17"/><circle cx="1304" cy="153" r="17"/><circle cx="1405" cy="139" r="28"/>
        <path d="M0 503l45 5M0 535l22 48c5-20 0-40 28-60M85 600c0 35 50 50 95 68l60 50 45-40M75 690c10-30 40-30 55-15 30 10 30 30 20 45M90 685c30-10 5 15 5 35M110 690c20-10 10 15 5 30M0 650c15 10 15 25 0 45M440 678l5 42M525 678c10 10 15 20 15 42M545 695h95M570 718c20-20 50-20 70-15M640 680c40 25 130 25 165 0M955 680v40M1185 680v40M1260 680c20 25 60 20 90 0M1360 720l60-40M1460 678v42M1545 720c0-30 10-35 23-40M330 680c10 12 20 12 30 0"/><circle cx="878" cy="686" r="17"/>
      </g>
      <!-- portraits and orbit, bottom right -->
      <g transform="translate(540 2040) scale(.3444 .3333)">
        <path d="M40 18L105 0M150 60c40-20 50-35 70-60M335 60c40-40 70-45 145-60v55M635 60c-10-50 10-55 50-60M820 0l12 58M665 28l20 18M685 28l-20 20M900 0c40 5 20 5 40 10-10 50 30 50 45 25 40 5 40-5 40-35M975 40l50 20M1060 45l70-40 70 50M10 220l15 34M215 220l-8 34M275 220v34M305 254l15-25 25 20 15-28M440 220l-25 34M665 220l5 34M830 254c0-20 5-25 5-34M1050 220l15 90M1015 330l150-32M1165 300c-40-10-60-5-100 15M1230 220l5 34M1278 220l8 34M1165 220c10 40 0 70-65 80M1470 105l98-75M1545 70c0 10 10 20 23 20M1545 105c0 10 10 20 23 20M1400 220c-5 20 0 40 5 60M1450 155c20 15 25-5 25-20M1495 170c0-10 25-15 30 0M1535 180c10 0 15 5 15 10M1500 185c0 25 20 20 25 15M1485 255c10 10 30 10 42 5M1500 350l68-5M1500 330c20 20 40 30 68 25"/>
        <circle cx="1507" cy="215" r="73"/><circle cx="1575" cy="228" r="14"/>
        <path d="M1040 380l30 35M1060 425l45-8M1060 450l45-12M1135 600h20M1530 500l38 55M1490 540c30 5 30 30 10 35M1450 605l118 55M1470 640l80 40-20 40M1355 720l35-55M1385 715l35-70M1385 715l25 10M1535 720l33-60M960 680c0-30 30-30 70 0 70-35 140-10 142 40M960 680c0 15 10 25 20 30l50-30M950 718c60-40 140-60 160-35 0 20-10 30-15 37M90 680c0 15 0 30 10 40M160 680l5 40 50-40M270 680c0 20-5 30-10 40M300 678c10 10 20 10 30 0M440 678c-5 20-5 30 0 42M460 685h20M505 685h20M480 700c10 10 20 10 25 0M540 680c30 30 60-5 55 20-5 10-20 10-30 20M0 685c15 5 15 20 10 35M860 680c10 15 20 15 30 0"/>
        <circle cx="558" cy="15" r="27"/><circle cx="1486" cy="5" r="27"/><circle cx="1087" cy="508" r="17"/><circle cx="1504" cy="558" r="17"/><circle cx="665" cy="698" r="17"/><circle cx="1238" cy="697" r="17"/>
      </g>
    </svg>

    <section class="thread" aria-label="Messages">
      <div class="day">Thursday</div>
      <ol class="messages">
        <li class="msg sent"><blockquote class="quote"><cite>AESTHETIC SHOES HUB</cite><p>Abhi nahi kal ho jayega</p></blockquote><div class="body">Itna time kyu<span class="meta">22:49<svg class="ticks"><use href="#ticks"/></svg></span></div></li>
        <li class="msg received tail"><div class="body">Company se krte haina isliye<span class="meta">22:50</span></div></li>
        <li class="msg sent tail"><blockquote class="quote"><cite>AESTHETIC SHOES HUB</cite><p>Company se krte haina isliye</p></blockquote><div class="body">Thike jaldi karo<span class="meta">22:50<svg class="ticks"><use href="#ticks"/></svg></span></div></li>
        <li class="msg received tail"><div class="body">Mujhe Krna hota to Mai abhi hi kr deta<span class="meta">22:50</span></div></li>
        <li class="msg sent tail"><div class="body">Aur orginal product ship karo<span class="meta">22:50<svg class="ticks"><use href="#ticks"/></svg></span></div></li>
        <li class="msg received tail"><div class="body">Wohi Kiya tha<span class="meta">22:51</span></div></li>
        <li class="msg sent tail"><div class="body">Mai usse time pai parcel check karunga agar sahi nahi nikal toh fir mai nahi pay karunga delivery box ko<span class="meta below">22:51<svg class="ticks"><use href="#ticks"/></svg></span></div></li>
        <li class="msg sent follow"><div class="body">Thike<span class="meta">22:51<svg class="ticks"><use href="#ticks"/></svg></span></div></li>
        <li class="msg received tail"><blockquote class="quote"><cite>You</cite><p>Mai usse time pai parcel check karunga agar sahi nahi nikal toh fir mai nahi pay karunga delivery box ko</p></blockquote><div class="body">Open box?<span class="meta">22:52</span></div></li>
        <li class="msg sent tail"><blockquote class="quote"><cite>AESTHETIC SHOES HUB</cite><p>Open box?</p></blockquote><div class="body">Haa<span class="meta">22:52<svg class="ticks"><use href="#ticks"/></svg></span></div></li>
      </ol>
      <div class="thumb"></div>
      <button class="to-bottom" aria-label="Scroll to latest"><svg viewBox="0 0 34 38" width="34" height="38"><path d="M3 3l14 13L31 3M3 21l14 13 14-13" fill="none" stroke="#8d9599" stroke-width="5" stroke-linecap="round" stroke-linejoin="round"/></svg></button>
    </section>

    <form class="composer">
      <div class="field">
        <button type="button" class="tool" aria-label="Stickers"><svg viewBox="0 0 60 60" width="60" height="60"><path d="M23 3h14q20 0 20 20v10q0 3-2 5L39 55q-3 2-6 2H23Q3 57 3 37V23Q3 3 23 3z" fill="none" stroke="currentColor" stroke-width="6"/><path d="M33 57V46q0-12 12-12h12" fill="none" stroke="currentColor" stroke-width="6"/><circle cx="19" cy="20" r="5" fill="currentColor"/><circle cx="40" cy="20" r="5" fill="currentColor"/><path d="M16 34h24l-6 9q-12 3-18-9z" fill="currentColor"/></svg></button>
        <input class="entry" type="text" placeholder="Message" aria-label="Message">
        <button type="button" class="tool" aria-label="Attach"><svg viewBox="0 0 60 60" width="60" height="60"><path d="M46 15v26a16 16 0 0 1-32 0V14a11 11 0 0 1 22 0v26a6 6 0 0 1-12 0V15" fill="none" stroke="currentColor" stroke-width="6" stroke-linecap="round"/></svg></button>
        <button type="button" class="tool" aria-label="Pay"><svg viewBox="0 0 60 60" width="60" height="60"><circle cx="30" cy="30" r="27" fill="none" stroke="currentColor" stroke-width="6"/><path d="M21 19h19M21 26h19M22 19h5q8 0 8 6.500T27 32h-3l10 12" fill="none" stroke="currentColor" stroke-width="4"/></svg></button>
        <button type="button" class="tool" aria-label="Camera"><svg viewBox="0 0 60 60" width="60" height="60"><path d="M3 12h12l6-6h18l6 6h12v42H3z" fill="none" stroke="currentColor" stroke-width="6" stroke-linejoin="round"/><circle cx="30" cy="33" r="10" fill="none" stroke="currentColor" stroke-width="6"/></svg></button>
      </div>
      <button type="button" class="mic" aria-label="Record voice message"><svg viewBox="0 0 42 58" width="42" height="58"><rect x="12" width="18" height="36" rx="9" fill="#0b1014"/><path d="M3 30q0 16 18 16t18-16M21 46v9" fill="none" stroke="#0b1014" stroke-width="6" stroke-linecap="round"/></svg></button>
    </form>
  </main>

  <nav class="navbar" aria-label="System">
    <button aria-label="Recent apps"><svg viewBox="0 0 48 48" width="48" height="48"><rect x="4" y="4" width="40" height="40" rx="5"/></svg></button>
    <button aria-label="Home"><svg viewBox="0 0 48 48" width="48" height="48"><circle cx="24" cy="24" r="20"/></svg></button>
    <button aria-label="Back"><svg viewBox="0 0 48 48" width="48" height="48"><path d="M42 4v40L6 24z" stroke-linejoin="round"/></svg></button>
  </nav>
</div>
</body>
</html>
```
FILE: styles.css
```css
* { box-sizing: border-box; margin: 0; padding: 0; }
body { background: #0b1014; color: #f7f8fa; font-family: Roboto, "Liberation Sans", sans-serif; }
button { border: 0; background: none; color: inherit; font: inherit; display: flex; align-items: center; justify-content: center; flex: none; }
svg { display: block; flex: none; }
.sprite { position: absolute; width: 0; height: 0; }
.app { height: 100vh; display: flex; flex-direction: column; overflow: hidden; }

/* system status bar */
.status { height: 110px; padding: 30px 92px 0 155px; display: flex; align-items: center; justify-content: space-between; color: #fff; flex: none; }
.status-side { display: flex; align-items: center; }
.status-text { font-size: 38px; font-weight: 500; line-height: 44px; }
.s-whatsapp { margin-left: 25px; }
.s-cast { margin-left: 18px; }
.uber { margin-left: 15px; font: 22px/26px Inter, sans-serif; }
.s-wifi { margin-left: 19px; }
.s-volte { margin-left: 28px; }
.s-signal { margin: 0 22px 0 18px; }
.s-battery { margin-left: 9px; }
.volte { font: 900 18px Roboto, sans-serif; fill: #0b1014; }

/* conversation header */
.appbar { height: 168px; padding: 0 30px 0 36px; display: flex; align-items: center; border-bottom: 2px solid #161c20; flex: none; }
.icon-btn { width: 72px; height: 72px; }
.avatar { margin-left: 51px; }
.logo-top { font: 700 17px "Liberation Sans", sans-serif; fill: #101a28; stroke: #b5bfcc; stroke-width: 1px; }
.logo-bottom { font: 700 16px "Liberation Sans", sans-serif; fill: #102b46; stroke: #64a9d6; stroke-width: 1px; }
.contact { flex: 1; min-width: 0; margin: 0 48px 0 20px; }
.name { font-size: 50px; font-weight: 400; line-height: 60px; white-space: nowrap; overflow: hidden; text-overflow: ellipsis; }
.presence { margin-top: 4px; font-size: 37px; line-height: 48px; }
.call { margin-left: 42px; }
.caret { margin: 0 33px 0 27px; }

/* chat surface */
.stage { flex: 1; min-height: 0; position: relative; display: flex; flex-direction: column; }
.wallpaper { position: absolute; inset: 0; width: 100%; height: 100%; fill: none; stroke: #22282b; stroke-width: 3px; stroke-linecap: round; stroke-linejoin: round; }
.wallpaper * { vector-effect: non-scaling-stroke; }
.thread { flex: 1; min-height: 0; position: relative; overflow: hidden; }
.day { position: absolute; z-index: 1; top: 6px; left: 50%; transform: translateX(-50%); padding: 4px 27px 0; border-radius: 22px; background: #12171b; color: #8d9599; font-size: 39px; font-weight: 500; line-height: 79px; }
/* the thread is scrolled part-way through the first bubble */
.messages { list-style: none; margin-top: -132px; padding: 0 51px; display: flex; flex-direction: column; gap: 30px; }
.msg { position: relative; border-radius: 34px; max-width: 858px; }
.sent { align-self: flex-end; background: #144d37; }
.received { align-self: flex-start; background: #1f272a; }
.follow { margin-top: -22px; }
.tail.sent { border-top-right-radius: 0; }
.tail.received { border-top-left-radius: 0; }
.tail::before { content: ""; position: absolute; top: 0; width: 22px; height: 32px; background: inherit; }
.sent.tail::before { left: 100%; clip-path: path("M0 0H15Q24 1 20 9L0 32Z"); }
.received.tail::before { right: 100%; clip-path: path("M22 0H7Q-2 1 2 9L22 32Z"); }
.body { display: flow-root; padding: 18px 24px 7px 30px; font-size: 48px; line-height: 57px; }
.sent .body { padding-right: 27px; }
.meta { float: right; display: flex; align-items: center; gap: 12px; margin: 31px 0 0 42px; font-size: 36px; line-height: 42px; color: #9fa3a5; }
.sent .meta { margin: 28px 0 3px 22px; color: #9db9ac; }
.sent .meta.below { margin-top: 23px; }
.ticks { width: 48px; height: 30px; }
.quote { position: relative; top: 12px; margin: 0 12px 12px; min-height: 144px; padding: 18px 24px 14px 37px; border-radius: 26px; background: linear-gradient(to right, #a791ff 12px, #154433 12px); display: flex; flex-direction: column; justify-content: center; font-size: 42px; line-height: 49px; }
.quote cite { font-style: normal; font-weight: 500; color: #d9d3ff; margin-bottom: 9px; }
.quote p { color: #9db4a9; }
.received .quote { background: linear-gradient(to right, #21c063 12px, #1c2329 12px); }
.received .quote cite { color: #abe8c3; }
.received .quote p { color: #8d9599; }
.thumb { position: absolute; right: 6px; top: 1199px; width: 12px; height: 144px; background: #ffffff44; }
.to-bottom { position: absolute; right: 36px; bottom: 48px; width: 96px; height: 96px; padding-top: 8px; border-radius: 50%; background: #28323a; box-shadow: 0 2px 6px #0006; }

/* message entry */
.composer { position: relative; display: flex; align-items: center; gap: 14px; padding: 9px 16px 14px 14px; flex: none; }
.field { flex: 1; min-width: 0; height: 141px; padding: 0 40px; border-radius: 71px; background: #1f272a; color: #8d9599; display: flex; align-items: center; }
.tool { width: 60px; height: 60px; margin-left: 84px; }
.tool:first-child { margin-left: 0; }
.entry { flex: 1; min-width: 0; margin-left: 42px; padding-top: 4px; border: 0; outline: 0; background: none; color: #f7f8fa; font: 54px/64px Roboto, sans-serif; }
.entry::placeholder { color: #8d9599; opacity: 1; }
.mic { width: 144px; height: 144px; border-radius: 50%; background: #21c063; }

/* system navigation */
.navbar { height: 132px; padding-right: 20px; background: #000; display: flex; justify-content: center; align-items: center; gap: 210px; flex: none; }
.navbar svg { fill: none; stroke: #999; stroke-width: 7px; }
```
